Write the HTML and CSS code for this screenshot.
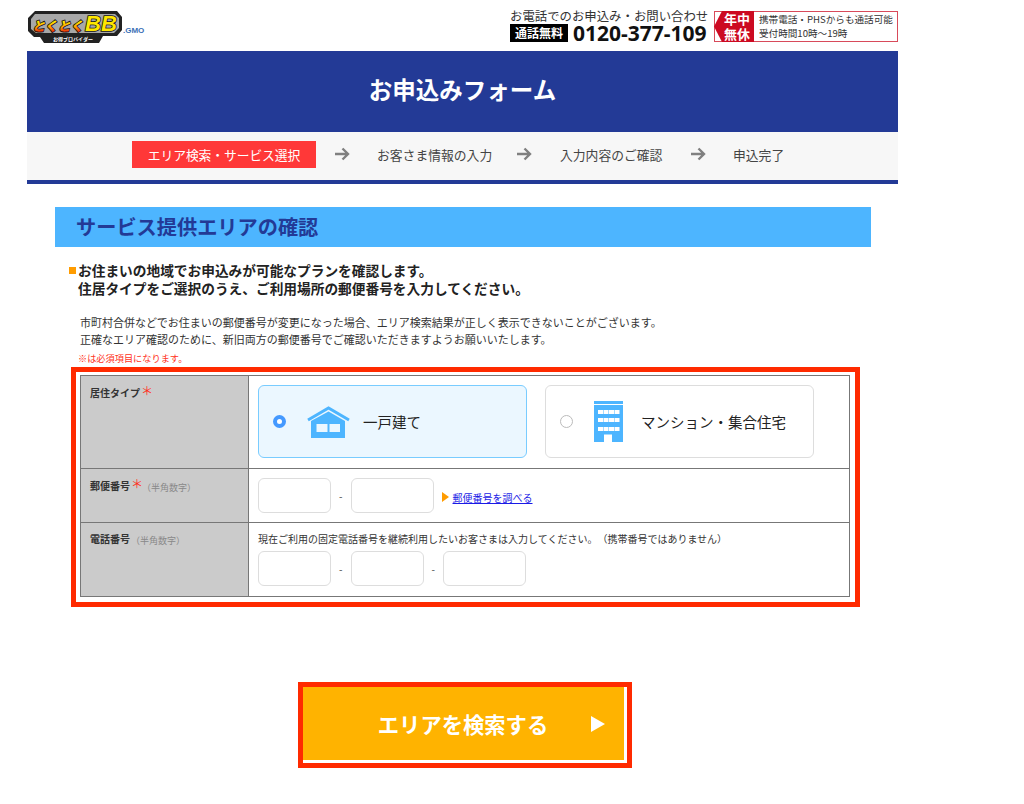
FILE: index.html
```html
<!DOCTYPE html>
<html lang="ja">
<head>
  <meta charset="UTF-8" />
  <title>お申込みフォーム</title>
  <link rel="stylesheet" href="styles.css">
</head>
<body>

<div class="wrap">

  <header class="top">
    <div class="logo">
      <svg class="logo-mark" width="96" height="34" viewBox="0 0 96 34">
        <defs>
          <linearGradient id="logoGrad" x1="0" y1="0" x2="0" y2="1">
            <stop offset="0.3" stop-color="#ffe600"/>
            <stop offset="0.6" stop-color="#ff9a00"/>
            <stop offset="0.85" stop-color="#e8200c"/>
          </linearGradient>
        </defs>
        <path d="M8 1H90L95 7V20L90 26H76L72 33H17L13 27H7L1 21V8Z" fill="#222"/>
        <path d="M8 4H88L92 8V18L87 23H9L4 19V9Z" fill="#a8a8a8"/>
        <text x="5" y="21" class="logo-kana" fill="url(#logoGrad)">とくとく</text>
        <text x="58" y="21" class="logo-bb" fill="#ffe600">BB</text>
        <text x="46" y="31" class="logo-sub" fill="#fff" text-anchor="middle">お得プロバイダー</text>
      </svg>
      <span class="logo-gmo">.GMO</span>
    </div>
    <div class="tel">
      <p class="tel-lead">お電話でのお申込み・お問い合わせ</p>
      <div class="tel-row">
        <span class="tel-free">通話無料</span>
        <span class="tel-number">0120-377-109</span>
      </div>
    </div>
    <div class="hours">
      <div class="hours-tag"><span>年中</span><span>無休</span></div>
      <div class="hours-text">携帯電話・PHSからも通話可能<br>受付時間10時〜19時</div>
    </div>
  </header>

  <div class="title-bar">
    <h1>お申込みフォーム</h1>
  </div>

  <nav class="steps">
    <span class="step step-current">エリア検索・サービス選択</span>
    <svg class="step-arrow" width="16" height="14" viewBox="0 0 16 14"><path d="M1 7H14M8.5 1.5L14 7L8.5 12.5" fill="none" stroke="#808080" stroke-width="2.4"/></svg>
    <span class="step step-2">お客さま情報の入力</span>
    <svg class="step-arrow" width="16" height="14" viewBox="0 0 16 14"><path d="M1 7H14M8.5 1.5L14 7L8.5 12.5" fill="none" stroke="#808080" stroke-width="2.4"/></svg>
    <span class="step step-3">入力内容のご確認</span>
    <svg class="step-arrow" width="16" height="14" viewBox="0 0 16 14"><path d="M1 7H14M8.5 1.5L14 7L8.5 12.5" fill="none" stroke="#808080" stroke-width="2.4"/></svg>
    <span class="step step-4">申込完了</span>
  </nav>

  <main class="content">
    <h2 class="section-title">サービス提供エリアの確認</h2>

    <p class="lead"><span class="lead-mark"></span>お住まいの地域でお申込みが可能なプランを確認します。<br>住居タイプをご選択のうえ、ご利用場所の郵便番号を入力してください。</p>

    <p class="note">市町村合併などでお住まいの郵便番号が変更になった場合、エリア検索結果が正しく表示できないことがございます。<br>正確なエリア確認のために、新旧両方の郵便番号でご確認いただきますようお願いいたします。</p>

    <p class="required-note">※は必須項目になります。</p>

    <div class="form-frame">
      <table class="form-table">
        <tr class="row-type">
          <th><span class="th-label">居住タイプ</span><span class="req">＊</span></th>
          <td>
            <div class="choices">
              <div class="choice choice-on">
                <span class="radio radio-on"></span>
                <svg class="choice-icon" width="43" height="32" viewBox="0 0 43 32">
                  <path d="M1 14L21.5 2L42 14" fill="none" stroke="#4db5ff" stroke-width="3"/>
                  <path d="M4 15L21.5 5.5L38 15V32H4ZM9.5 18V26H20.5V18ZM22.5 18V26H33V18Z" fill="#4db5ff" fill-rule="evenodd"/>
                </svg>
                <span class="choice-label">一戸建て</span>
              </div>
              <div class="choice">
                <span class="radio"></span>
                <svg class="choice-icon" width="29" height="41" viewBox="0 0 29 41">
                  <path d="M0 0H29V3H0ZM0 4H29V41H18V33.5H10V41H0ZM4 9V13H9V9ZM9.5 9V13H14.5V9ZM15 9V13H20V9ZM20.5 9V13H25.5V9ZM4 17V21H9V17ZM9.5 17V21H14.5V17ZM15 17V21H20V17ZM20.5 17V21H25.5V17ZM4 26V30H9V26ZM9.5 26V30H14.5V26ZM15 26V30H20V26ZM20.5 26V30H25.5V26Z" fill="#4db5ff" fill-rule="evenodd"/>
                </svg>
                <span class="choice-label choice-label-flat">マンション・集合住宅</span>
              </div>
            </div>
          </td>
        </tr>
        <tr class="row-zip">
          <th><span class="th-label">郵便番号</span><span class="req">＊</span><span class="th-hint">（半角数字）</span></th>
          <td>
            <div class="fields">
              <input class="box box-s" type="text">
              <span class="dash">-</span>
              <input class="box box-m" type="text">
              <span class="zip-link"><span class="link-mark"></span><a href="#">郵便番号を調べる</a></span>
            </div>
          </td>
        </tr>
        <tr class="row-tel">
          <th><span class="th-label">電話番号</span><span class="th-hint">（半角数字）</span></th>
          <td>
            <p class="tel-note">現在ご利用の固定電話番号を継続利用したいお客さまは入力してください。（携帯番号ではありません）</p>
            <div class="fields">
              <input class="box box-s" type="text">
              <span class="dash">-</span>
              <input class="box box-s" type="text">
              <span class="dash">-</span>
              <input class="box box-l" type="text">
            </div>
          </td>
        </tr>
      </table>
    </div>

    <div class="submit-area">
      <div class="submit-frame">
        <button class="submit" type="button">
          <span class="submit-label">エリアを検索する</span>
          <span class="submit-arrow"></span>
        </button>
      </div>
    </div>
  </main>

</div>

</body>
</html>
```

FILE: styles.css
```css
* {
  box-sizing: border-box;
}

body {
  margin: 0;
  background: white;
  color: #222;
  font-family: "Noto Sans CJK JP", "Noto Sans", sans-serif;
  text-spacing-trim: space-all;
}

p, h1, h2 {
  margin: 0;
}

.wrap {
  width: 871px;
  margin-left: 27px;
}

/* header */
.top {
  display: flex;
  height: 51px;
}

.logo {
  display: flex;
  align-items: flex-end;
  width: 120px;
  height: 44px;
  padding-top: 9px;
}

.logo-mark {
  display: block;
  flex: none;
}

.logo-kana {
  font-size: 13px;
  font-weight: 900;
  font-style: italic;
  stroke: #111;
  stroke-width: 1.6px;
  paint-order: stroke;
}

.logo-bb {
  font-family: "Liberation Sans", sans-serif;
  font-size: 22px;
  font-weight: bold;
  font-style: italic;
  stroke: #111;
  stroke-width: 1.6px;
  paint-order: stroke;
}

.logo-sub {
  font-size: 5px;
  font-weight: bold;
}

.logo-gmo {
  margin: 0 0 9px 0;
  color: #3a6fb5;
  font-family: "Liberation Sans", sans-serif;
  font-size: 8px;
  line-height: 8px;
  font-weight: bold;
}

.tel {
  margin-left: 363px;
  padding-top: 8px;
  width: 198px;
  flex: none;
}

.tel-lead {
  font-size: 12.4px;
  line-height: 16px;
  color: #333;
  white-space: nowrap;
}

.tel-row {
  display: flex;
  align-items: center;
  height: 18px;
}

.tel-free {
  flex: none;
  width: 58px;
  height: 18px;
  background: black;
  color: white;
  font-size: 12px;
  font-weight: bold;
  line-height: 18px;
  text-align: center;
  white-space: nowrap;
}

.tel-number {
  margin-left: 5px;
  font-family: "Open Sans", sans-serif;
  font-size: 21px;
  font-weight: 700;
  line-height: 18px;
  color: #111;
  white-space: nowrap;
}

.hours {
  display: flex;
  flex: none;
  height: 31px;
  margin: 11px 0 0 6px;
  width: 184px;
  border: 1px solid #d84a5a;
}

.hours-tag {
  flex: none;
  width: 40px;
  margin: -1px 0 -1px -1px;
  padding: 1px 0 0 10px;
  background: #cc0a22;
  clip-path: polygon(8px 0, 100% 0, 100% 100%, 8px 100%, 0 50%);
  color: white;
  font-family: "Liberation Sans", "Noto Sans CJK JP", sans-serif;
  font-size: 13px;
  font-weight: bold;
  line-height: 15px;
  white-space: nowrap;
}

.hours-tag span {
  display: block;
  height: 15px;
}

.hours-text {
  padding: 1px 0 0 5px;
  font-size: 9.6px;
  line-height: 13.5px;
  color: #333;
  white-space: nowrap;
}

/* title and steps */
.title-bar {
  height: 81px;
  padding-bottom: 5px;
  background: #233a96;
  display: flex;
  align-items: center;
  justify-content: center;
}

.title-bar h1 {
  color: white;
  font-size: 23.5px;
  font-weight: 700;
}

.steps {
  display: flex;
  align-items: center;
  height: 52px;
  padding: 0 0 4px 105px;
  background: #f7f7f7;
  border-bottom: 4px solid #233a96;
}

.step {
  font-size: 12.8px;
  color: #444;
  white-space: nowrap;
}

.step-current {
  width: 184px;
  height: 27px;
  background: #ff3838;
  color: white;
  letter-spacing: -0.1px;
  line-height: 27px;
  text-align: center;
}

.step-arrow {
  margin-left: 18px;
  flex: none;
}

.step-2 { margin-left: 27px; width: 121px; }
.step-3 { margin-left: 28px; width: 112px; }
.step-4 { margin-left: 27px; }

/* main part */
.content {
  padding: 23px 0 0 28px;
}

.section-title {
  width: 816px;
  height: 40px;
  padding-left: 21px;
  background: #4db5ff;
  color: #233a96;
  font-size: 20.2px;
  font-weight: 700;
  line-height: 40px;
}

.lead {
  margin: 14px 0 0 23px;
  font-size: 13.7px;
  font-weight: 700;
  line-height: 18px;
  color: #222;
  position: relative;
}

.lead-mark {
  position: absolute;
  left: -9px;
  top: 6px;
  width: 7px;
  height: 7px;
  background: #ff9c00;
}

.note {
  margin: 17px 0 0 25px;
  font-size: 11px;
  line-height: 17px;
  color: #333;
  white-space: nowrap;
}

.required-note {
  margin: 3px 0 0 23px;
  font-size: 9.2px;
  line-height: 14px;
  color: #ff3020;
}

.form-frame {
  width: 789px;
  margin: 2px 0 0 16px;
  padding: 3px 5px 5px 4px;
  border: 5px solid #ff2a00;
}

.form-table {
  width: 770px;
  border-collapse: collapse;
  border: 1px solid #555;
  table-layout: fixed;
}

.form-table th,
.form-table td {
  padding: 0;
  vertical-align: top;
  border: 1px solid #777;
  text-align: left;
}

.form-table th {
  width: 168px;
  padding: 8px 0 0 9px;
  background: #cbcbcb;
  font-size: 10px;
  font-weight: 700;
  line-height: 14px;
  white-space: nowrap;
}

.row-type { height: 93px; }
.row-zip { height: 54px; }
.row-tel { height: 74px; }

.form-table .row-tel th {
  padding-top: 9px;
}

.form-table td {
  padding: 9px 0 0 9px;
}

.th-label {
  font-size: 10px;
  color: #333;
}

.req {
  margin: 0 -2px 0 1px;
  color: #ff3020;
  font-size: 12px;
  font-weight: 400;
  line-height: 14px;
  vertical-align: 1px;
}

.th-hint {
  margin-left: 1px;
  font-size: 9px;
  font-weight: 400;
  color: #888;
  vertical-align: -1px;
}

.choices {
  display: flex;
  gap: 18px;
}

.choice {
  display: flex;
  align-items: center;
  width: 269px;
  height: 73px;
  padding-left: 14px;
  border: 1px solid #ddd;
  border-radius: 6px;
  background: white;
}

.choice-on {
  background: #ebf7ff;
  border-color: #79ccff;
}

.radio {
  flex: none;
  width: 13px;
  height: 13px;
  border: 1px solid #bbb;
  border-radius: 50%;
  background: white;
}

.radio-on {
  border: 4px solid #4499ff;
}

.choice-icon {
  margin-left: 21px;
  flex: none;
}

.choice-label {
  margin-left: 13px;
  font-size: 14.5px;
  color: #222;
  white-space: nowrap;
}

.choice-label-flat {
  margin-left: 18px;
}

.fields {
  display: flex;
  align-items: center;
}

.box {
  height: 35px;
  padding: 0;
  border: 1px solid #ddd;
  border-radius: 6px;
  background: white;
}

.box-s { width: 73px; }
.box-m { width: 83px; }
.box-l { width: 83px; }

.dash {
  width: 19.5px;
  font-size: 10px;
  text-align: center;
  color: #444;
}

.zip-link {
  display: flex;
  align-items: center;
  margin-left: 8px;
  padding-top: 3px;
  font-size: 10px;
}

.link-mark {
  width: 0;
  height: 0;
  margin-right: 4px;
  border-left: 7px solid #ff9c00;
  border-top: 5px solid transparent;
  border-bottom: 5px solid transparent;
}

.zip-link a {
  color: #1a1ae6;
}

.form-table .row-tel td {
  padding-top: 8px;
}

.tel-note {
  font-size: 10px;
  line-height: 16px;
  color: #333;
  margin-bottom: 4px;
  white-space: nowrap;
}

/* search button */
.submit-area {
  padding: 75px 0 0 243px;
}

.submit-frame {
  width: 334px;
  height: 86px;
  border: 5px solid #ff2a00;
}

.submit {
  position: relative;
  display: block;
  width: 100%;
  height: 100%;
  padding: 0 1px 0 0;
  border: none;
  border-right: 3px solid white;
  border-bottom: 3px solid white;
  background: #ffb300;
  color: white;
  font-family: inherit;
  font-size: 21.3px;
  font-weight: 700;
}

.submit-arrow {
  position: absolute;
  right: 19px;
  top: 29px;
  width: 0;
  height: 0;
  border-left: 14px solid white;
  border-top: 8px solid transparent;
  border-bottom: 8px solid transparent;
}
```
